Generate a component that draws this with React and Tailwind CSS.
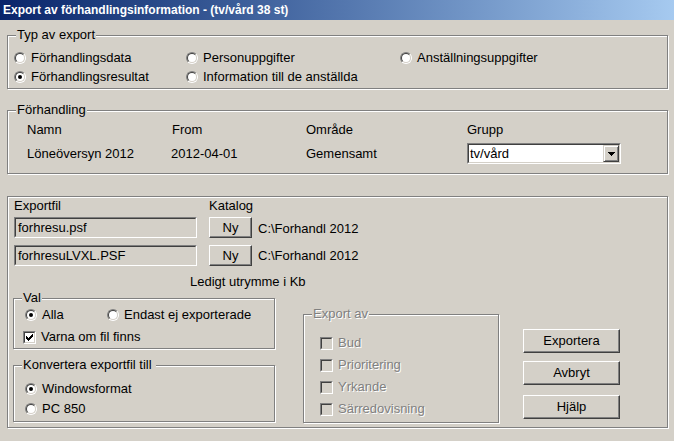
import React from "react";

function Radio({ checked }) {
  return (
    <span className="inline-block w-[12px] h-[12px] shrink-0 rounded-full border border-t-[#808080] border-l-[#808080] border-r-white border-b-white">
      <span className="flex w-full h-full items-center justify-center rounded-full border border-t-[#404040] border-l-[#404040] border-r-[#d4d0c8] border-b-[#d4d0c8] bg-white">
        {checked && <span className="w-[4px] h-[4px] rounded-full bg-black" />}
      </span>
    </span>
  );
}

function Check({ checked, disabled }) {
  const cols = [
    [0, 2], [1, 3], [2, 4], [3, 3], [4, 2], [5, 1], [6, 0],
  ];
  return (
    <span className="inline-block w-[13px] h-[13px] shrink-0 border border-t-[#808080] border-l-[#808080] border-r-white border-b-white">
      <span
        className={`flex w-full h-full items-center justify-center border border-t-[#404040] border-l-[#404040] border-r-[#d4d0c8] border-b-[#d4d0c8] ${
          disabled ? "bg-[#d4d0c8]" : "bg-white"
        }`}
      >
        {checked && (
          <svg width="7" height="7" viewBox="0 0 7 7" shapeRendering="crispEdges">
            {cols.map(([x, y]) => (
              <rect key={x} x={x} y={y} width="1" height="3" fill="#000" />
            ))}
          </svg>
        )}
      </span>
    </span>
  );
}

function RadioItem({ label, checked, className = "" }) {
  return (
    <div className={`flex items-center gap-[5px] ${className}`}>
      <Radio checked={checked} />
      <span>{label}</span>
    </div>
  );
}

function Group({ label, className = "", labelClass = "", children }) {
  return (
    <div
      className={`relative border border-[#808080] shadow-[inset_1px_1px_0_#fff,1px_1px_0_#fff] ${className}`}
    >
      {label && (
        <span
          className={`absolute left-[8px] top-[-9px] px-[1px] bg-[#d4d0c8] leading-[16px] whitespace-pre ${labelClass}`}
        >
          {label}
        </span>
      )}
      {children}
    </div>
  );
}

function Btn({ children, className = "" }) {
  return (
    <div
      className={`flex items-center justify-center border border-t-white border-l-white border-r-[#404040] border-b-[#404040] shadow-[inset_-1px_-1px_0_#808080] ${className}`}
    >
      {children}
    </div>
  );
}

function Field({ value, className = "" }) {
  return (
    <div
      className={`border border-t-[#808080] border-l-[#808080] border-r-white border-b-white ${className}`}
    >
      <div className="w-full h-full flex items-center pl-[2px] border border-t-[#404040] border-l-[#404040] border-r-[#d4d0c8] border-b-[#d4d0c8] bg-[#d4d0c8]">
        {value}
      </div>
    </div>
  );
}

function Combo({ value }) {
  return (
    <div className="w-[154px] h-[21px] border border-t-[#808080] border-l-[#808080] border-r-white border-b-white">
      <div className="w-full h-full flex items-center border border-t-[#404040] border-l-[#404040] border-r-[#d4d0c8] border-b-[#d4d0c8] bg-white">
        <span className="flex-1 pl-[1px]">{value}</span>
        <div className="w-[16px] h-full flex items-center justify-center bg-[#d4d0c8] border border-t-[#d4d0c8] border-l-[#d4d0c8] border-r-[#404040] border-b-[#404040] shadow-[inset_1px_1px_0_#fff,inset_-1px_-1px_0_#808080]">
          <svg width="7" height="4" viewBox="0 0 7 4" shapeRendering="crispEdges">
            <path d="M0 0H7V1H6V2H5V3H4V4H3V3H2V2H1V1H0Z" fill="#000" />
          </svg>
        </div>
      </div>
    </div>
  );
}

function DisabledCheck({ label }) {
  return (
    <div className="h-[22px] flex items-center gap-[5px]">
      <Check disabled />
      <span className="text-[#808080] [text-shadow:1px_1px_0_#fff]">{label}</span>
    </div>
  );
}

export default function App() {
  return (
    <div className="w-[674px] h-[441px] overflow-hidden bg-[#d4d0c8] font-['Liberation_Sans',Arial,sans-serif] text-[13px] leading-[16px] text-black">
      <div className="h-[20px] flex items-center pl-[3px] bg-linear-to-r from-[#0a246a] to-[#a6caf0] text-white font-bold text-[12px]">
        Export av förhandlingsinformation - (tv/vård 38 st)
      </div>

      <div className="pl-[7px] pt-[15px]">
        <Group label="Typ av export" className="w-[661px] h-[54px] pt-[12px] pl-[6px]">
          <div className="grid grid-cols-[172px_214px_1fr] grid-rows-[19px_19px]">
            <RadioItem label="Förhandlingsdata" />
            <RadioItem label="Personuppgifter" />
            <RadioItem label="Anställningsuppgifter" />
            <RadioItem label="Förhandlingsresultat" checked />
            <RadioItem label="Information till de anställda" />
            <div />
          </div>
        </Group>

        <Group label="Förhandling" className="mt-[21px] w-[661px] h-[64px] pt-[10px] pl-[19px]">
          <div className="grid grid-cols-[145px_134px_161px_154px] h-[17px] items-center">
            <span>Namn</span>
            <span>From</span>
            <span>Område</span>
            <span>Grupp</span>
          </div>
          <div className="grid grid-cols-[145px_134px_161px_154px] mt-[5px] h-[21px] items-center">
            <span>Löneöversyn 2012</span>
            <span className="-ml-[1px]">2012-04-01</span>
            <span>Gemensamt</span>
            <Combo value="tv/vård" />
          </div>
        </Group>

        <Group className="mt-[22px] w-[661px] h-[232px] pl-[5px]">
          <div className="grid grid-cols-[196px_49px_1fr] h-[17px] items-center">
            <span className="ml-[1px]">Exportfil</span>
            <span>Katalog</span>
            <span />
          </div>
          <div className="grid grid-cols-[196px_49px_1fr] mt-[3px] h-[21px] items-center">
            <Field value="forhresu.psf" className="ml-[1px] w-[183px] h-[21px]" />
            <Btn className="w-[43px] h-[21px]">Ny</Btn>
            <span className="mt-[2px]">C:\Forhandl 2012</span>
          </div>
          <div className="grid grid-cols-[196px_49px_1fr] mt-[7px] h-[21px] items-center">
            <Field value="forhresuLVXL.PSF" className="ml-[1px] w-[183px] h-[21px]" />
            <Btn className="w-[43px] h-[21px]">Ny</Btn>
            <span>C:\Forhandl 2012</span>
          </div>
          <div className="mt-[8px] h-[16px] pl-[177px] flex items-center">Ledigt utrymme i Kb</div>

          <div className="mt-[8px] flex items-start">
            <div className="w-[262px]">
              <Group label="Val" className="h-[51px] pt-[7px] pl-[11px]">
                <div className="h-[18px] flex items-center">
                  <RadioItem label="Alla" checked className="w-[82px]" />
                  <RadioItem label="Endast ej exporterade" />
                </div>
                <div className="mt-[4px] h-[18px] -ml-[2px] flex items-center gap-[5px]">
                  <Check checked />
                  <span>Varna om fil finns</span>
                </div>
              </Group>
              <Group label="Konvertera exportfil till " className="mt-[16px] h-[57px] pt-[13px] pl-[11px]">
                <RadioItem label="Windowsformat" checked className="h-[20px]" />
                <RadioItem label="PC 850" className="h-[20px]" />
              </Group>
            </div>

            <Group
              label="Export av"
              labelClass="text-[#808080] [text-shadow:1px_1px_0_#fff]"
              className="ml-[28px] mt-[16px] w-[196px] h-[109px] pt-[17px] pl-[16px]"
            >
              <DisabledCheck label="Bud" />
              <DisabledCheck label="Prioritering" />
              <DisabledCheck label="Yrkande" />
              <DisabledCheck label="Särredovisning" />
            </Group>

            <div className="ml-[24px] flex flex-col">
              <Btn className="mt-[31px] w-[97px] h-[24px]">Exportera</Btn>
              <Btn className="mt-[8px] w-[97px] h-[24px]">Avbryt</Btn>
              <Btn className="mt-[10px] w-[97px] h-[24px]">Hjälp</Btn>
            </div>
          </div>
        </Group>
      </div>
    </div>
  );
}
